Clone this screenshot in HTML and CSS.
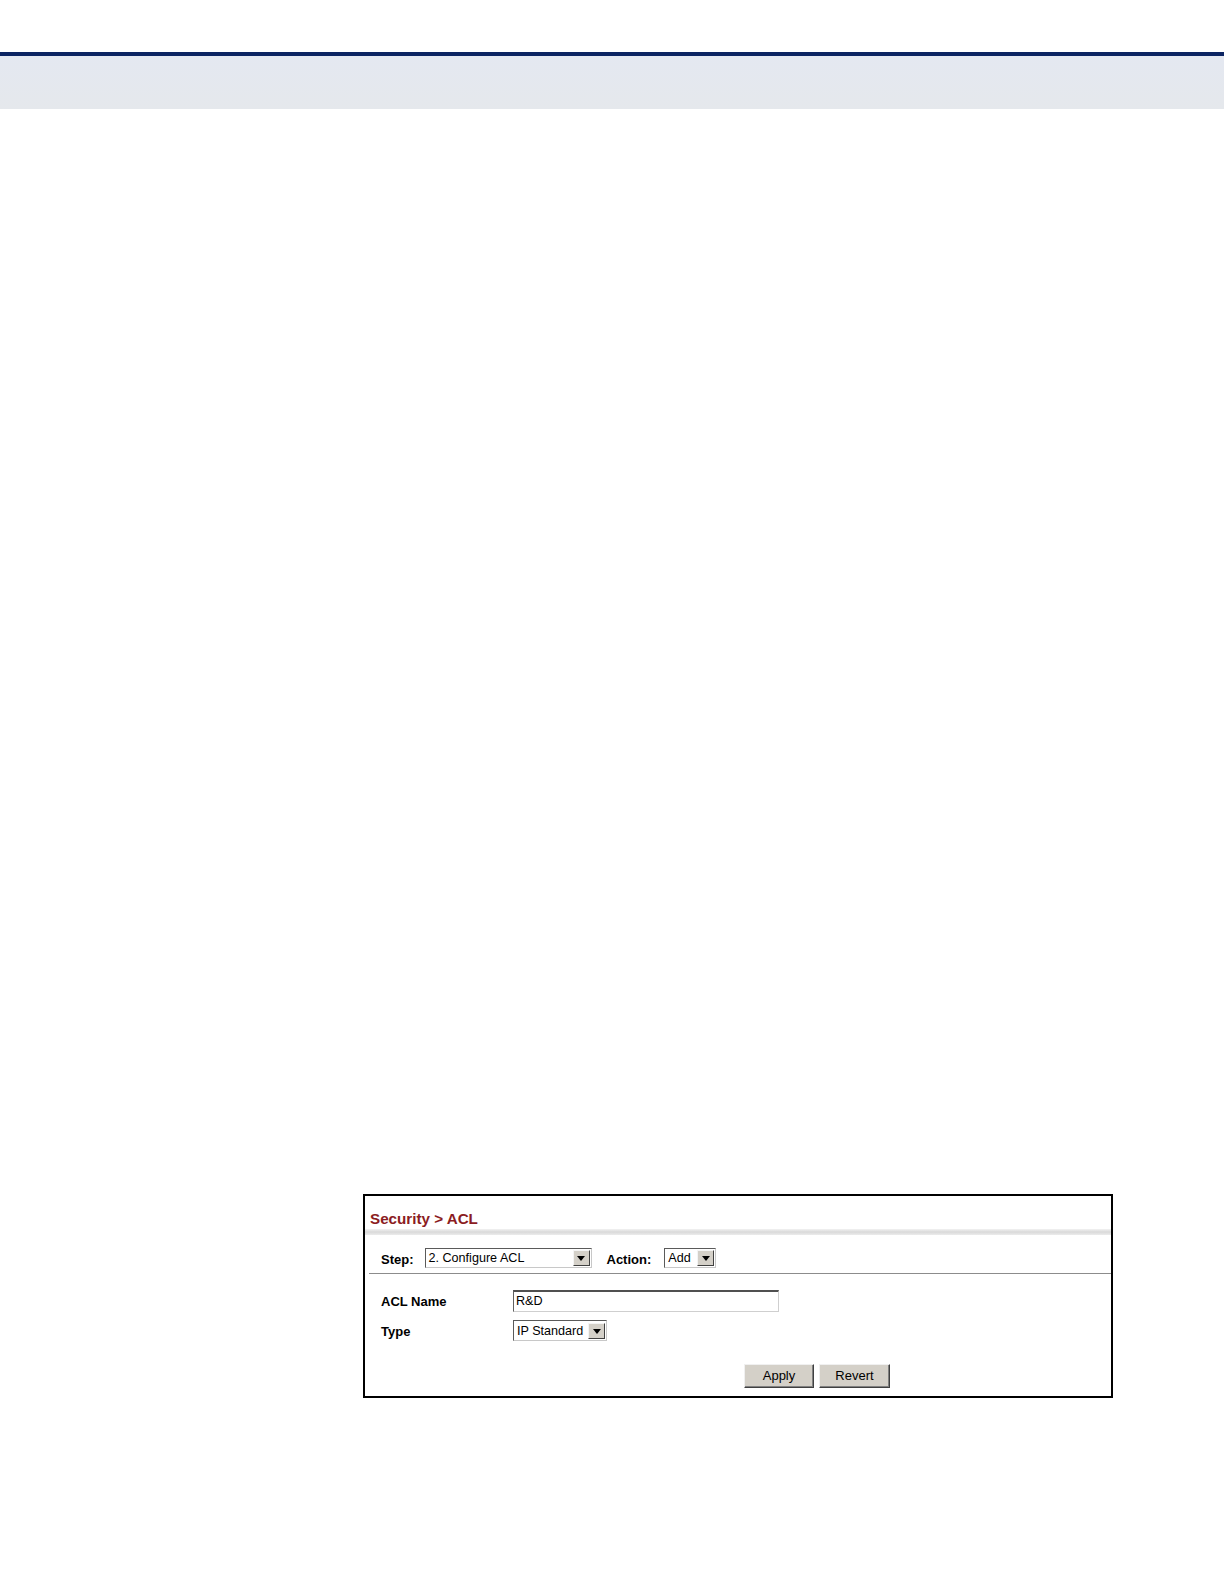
FILE: index.html
```html
<!DOCTYPE html>
<html>
<head>
<meta charset="utf-8">
<title>Security &gt; ACL</title>
<link rel="stylesheet" href="styles.css">
</head>
<body>
<div class="page-header"></div>

<div class="panel">
  <div class="panel-title">Security &gt; ACL</div>
  <div class="title-bar"></div>

  <div class="step-row">
    <span class="field-label">Step:</span>
    <div class="dropdown step-select"><span class="dropdown-text">2. Configure ACL</span><span class="dropdown-arrow"><span class="tri"></span></span></div>
    <span class="field-label action-label">Action:</span>
    <div class="dropdown action-select"><span class="dropdown-text">Add</span><span class="dropdown-arrow"><span class="tri"></span></span></div>
  </div>
  <div class="divider"></div>

  <div class="form-grid">
    <span class="form-label">ACL Name</span>
    <div class="text-input">R&amp;D</div>
    <span class="form-label">Type</span>
    <div class="dropdown type-select"><span class="dropdown-text">IP Standard</span><span class="dropdown-arrow"><span class="tri"></span></span></div>
  </div>

  <div class="button-row">
    <span class="btn btn-apply">Apply</span>
    <span class="btn btn-revert">Revert</span>
  </div>
</div>
</body>
</html>
```

FILE: styles.css
```css
html, body {
  margin: 0;
  padding: 0;
  background: #ffffff;
  font-family: "Liberation Sans", Arial, sans-serif;
  color: #000;
}

.page-header {
  margin-top: 52px;
  height: 53px;
  border-top: 4px solid #0b2462;
  background: linear-gradient(#e4e8f1, #e5e8ec);
}

.panel {
  box-sizing: border-box;
  margin-top: 1085px;
  margin-left: 363px;
  width: 750px;
  height: 204px;
  border: 2px solid #000;
  background: #fff;
}

.panel-title {
  padding: 14px 0 0 5px;
  font-size: 15.2px;
  line-height: 17px;
  font-weight: bold;
  color: #8b1c22;
}

.title-bar {
  margin-top: 2px;
  height: 6px;
  background: linear-gradient(#f2f2f2, #d9d9d9 50%, #ececec);
}

.step-row {
  display: flex;
  align-items: center;
  margin-top: 13px;
  padding-left: 16px;
  height: 20px;
}

.field-label {
  font-size: 13px;
  font-weight: bold;
  line-height: 15px;
  padding-top: 3px;
  margin-right: 11px;
}

.action-label {
  margin-left: 15px;
  margin-right: 13px;
}

.dropdown {
  box-sizing: border-box;
  display: flex;
  align-items: center;
  justify-content: space-between;
  height: 20px;
  border: 1px solid;
  border-color: #5a5a5a #c8c8c8 #c8c8c8 #5a5a5a;
  background: #fff;
  padding: 0 1px 0 3px;
}

.dropdown-text {
  font-size: 12.6px;
  line-height: 14px;
  white-space: nowrap;
}

.dropdown-arrow {
  box-sizing: border-box;
  display: flex;
  align-items: center;
  justify-content: center;
  width: 17px;
  height: 16px;
  background: #d4d0c8;
  border: 1px solid;
  border-color: #f4f4f4 #404040 #404040 #f4f4f4;
}

.tri {
  width: 0;
  height: 0;
  border-left: 4.5px solid transparent;
  border-right: 4.5px solid transparent;
  border-top: 5px solid #000;
  margin-top: 1px;
}

.step-select {
  width: 167px;
}

.action-select {
  width: 52px;
}

.type-select {
  width: 94px;
  height: 21px;
}

.divider {
  margin: 5px 0 0 4px;
  height: 1px;
  background: #8c8c8c;
}

.form-grid {
  display: grid;
  grid-template-columns: 132px 266px;
  row-gap: 8px;
  align-items: center;
  margin-top: 16px;
  padding-left: 16px;
}

.form-label {
  font-size: 13px;
  font-weight: bold;
  line-height: 15px;
  padding-top: 1px;
}

.text-input {
  box-sizing: border-box;
  height: 22px;
  border: 1px solid;
  border-top: 2px solid #505050;
  border-left-color: #606060;
  border-right-color: #cfcfcf;
  border-bottom-color: #cfcfcf;
  padding: 2px 0 0 2px;
  font-size: 12.6px;
  line-height: 15px;
  background: #fff;
}

.button-row {
  display: flex;
  gap: 5px;
  margin-top: 23px;
  padding-left: 379px;
}

.btn {
  box-sizing: border-box;
  display: flex;
  align-items: center;
  justify-content: center;
  height: 24px;
  font-size: 13px;
  background: #d4d0c8;
  border: 1px solid;
  border-color: #f0f0f0 #404040 #404040 #f0f0f0;
  box-shadow: inset -1px -1px 0 #808080;
  padding-bottom: 1px;
}

.btn-apply {
  width: 70px;
}

.btn-revert {
  width: 71px;
}
```
